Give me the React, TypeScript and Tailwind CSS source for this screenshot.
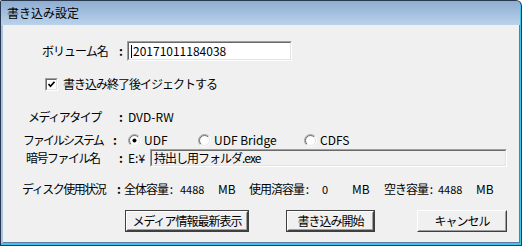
import React from "react";

function Radio({ checked, id }: { checked?: boolean; id: string }) {
	return (
		<svg width="13" height="13" viewBox="0 0 13 13" className="shrink-0">
			<defs>
				<linearGradient id={id + "o"} x1="0" y1="0" x2="1" y2="1">
					<stop offset="0.45" stopColor="#a0a0a0" />
					<stop offset="0.55" stopColor="#ffffff" />
				</linearGradient>
				<linearGradient id={id + "i"} x1="0" y1="0" x2="1" y2="1">
					<stop offset="0.45" stopColor="#696969" />
					<stop offset="0.55" stopColor="#e3e3e3" />
				</linearGradient>
			</defs>
			<circle cx="6.5" cy="6.5" r="6" fill="none" stroke={`url(#${id}o)`} strokeWidth="1" />
			<circle cx="6.5" cy="6.5" r="5" fill="#ffffff" stroke={`url(#${id}i)`} strokeWidth="1" />
			{checked && <circle cx="6.5" cy="6.5" r="2" fill="#000000" />}
		</svg>
	);
}

function Checkbox() {
	return (
		<div className="w-[13px] h-[13px] shrink-0 border border-t-[#a0a0a0] border-l-[#a0a0a0] border-b-white border-r-white">
			<div className="w-full h-full bg-white border border-t-[#696969] border-l-[#696969] border-b-[#e3e3e3] border-r-[#e3e3e3] flex items-center justify-center">
				<svg width="9" height="9" viewBox="0 0 9 9">
					<polyline points="1.5,4 3.5,6.2 7.5,1.8" fill="none" stroke="#000" strokeWidth="1.7" />
				</svg>
			</div>
		</div>
	);
}

function Button({ label, width, isDefault }: { label: string; width: string; isDefault?: boolean }) {
	return (
		<div className={`${width} h-[22px] ${isDefault ? "border border-[#404040]" : ""} bg-[#f0f0f0]`}>
			<div className="w-full h-full border border-t-white border-l-white border-b-[#404040] border-r-[#404040]">
				<div className="w-full h-full border border-t-[#f0f0f0] border-l-[#f0f0f0] border-b-[#a0a0a0] border-r-[#a0a0a0] flex items-center justify-center text-[12px] leading-none tracking-[-1px]">
					{label}
				</div>
			</div>
		</div>
	);
}

function Colon({ width }: { width: string }) {
	return <span className={`${width} shrink-0 font-bold pl-[1px]`}>:</span>;
}

export default function App() {
	return (
		<div className="w-[522px] h-[246px] whitespace-nowrap font-['Noto_Sans_CJK_JP','Noto_Sans',sans-serif] text-black bg-[#27384f] rounded-tr-[6px] rounded-tl-[2px] p-px">
			<div className="w-full h-full flex flex-col rounded-tr-[5px] overflow-hidden bg-[#3fc4ec] pb-[2px] pr-[1px]">
				{/* title bar */}
				<div className="h-[24px] shrink-0 bg-gradient-to-b from-[#8eadd1] to-[#bad2eb] flex items-center pl-[6px] text-[12px] leading-none">
					書き込み設定
				</div>
				<div className="flex-1 flex border-l-2 border-[#a9c3e0] bg-[#f0f0f0]">
					<div className="flex-1 flex flex-col text-[12px] leading-none border-b border-r border-[#5c7ca3]">
						{/* volume name */}
						<div className="mt-[16px] h-[20px] flex items-center">
							<span className="ml-[39px] w-[76px] shrink-0 tracking-[-1px]">ボリューム名</span>
							<Colon width="w-[9px]" />
							<div className="w-[165px] h-[20px] shrink-0 border border-t-[#a0a0a0] border-l-[#a0a0a0] border-b-white border-r-white">
								<div className="w-full h-full bg-white border border-t-[#696969] border-l-[#696969] border-b-[#e3e3e3] border-r-[#e3e3e3] flex items-center pl-[2px]">
									<span className="w-px h-[13px] bg-black mr-px" />
									20171011184038
								</div>
							</div>
						</div>

						{/* eject checkbox */}
						<div className="mt-[16px] h-[14px] flex items-center">
							<div className="ml-[42px]">
								<Checkbox />
							</div>
							<span className="ml-[5px] tracking-[-1px]">書き込み終了後イジェクトする</span>
						</div>

						{/* media type */}
						<div className="mt-[19px] h-[14px] flex items-center">
							<span className="ml-[25px] w-[90px] shrink-0 tracking-[-1.5px]">メディアタイプ</span>
							<Colon width="w-[10px]" />
							<span>DVD-RW</span>
						</div>

						{/* file system */}
						<div className="mt-[9px] h-[14px] flex items-center">
							<span className="ml-[20px] w-[89px] shrink-0 tracking-[-2px]">ファイルシステム</span>
							<Colon width="w-[16px]" />
							<Radio checked id="r1" />
							<span className="ml-[3px] w-[54px] shrink-0">UDF</span>
							<Radio id="r2" />
							<span className="ml-[3px] w-[90px] shrink-0">UDF Bridge</span>
							<Radio id="r3" />
							<span className="ml-[3px]">CDFS</span>
						</div>

						{/* encrypted file */}
						<div className="mt-[2px] h-[18px] flex items-center">
							<span className="ml-[23px] w-[92px] shrink-0 tracking-[-1.5px]">暗号ファイル名</span>
							<Colon width="w-[10px]" />
							<span className="w-[22px] shrink-0">E:¥</span>
							<div className="w-[357px] h-[18px] shrink-0 border border-t-[#a0a0a0] border-l-[#a0a0a0] border-b-white border-r-white">
								<div className="w-full h-full bg-[#f0f0f0] border border-t-[#696969] border-l-[#696969] border-b-[#e3e3e3] border-r-[#e3e3e3] flex items-center pl-[2px] tracking-[-1px]">
									持出し用フォルダ.exe
								</div>
							</div>
						</div>

						{/* disk usage */}
						<div className="mt-[15px] h-[14px] flex items-center">
							<span className="ml-[19px] w-[94px] shrink-0 tracking-[-1.5px]">ディスク使用状況</span>
							<Colon width="w-[8px]" />
							<span className="w-[56px] shrink-0 tracking-[-1px]">全体容量 :</span>
							<span className="w-[38px] shrink-0 text-[11px]">4488</span>
							<span className="w-[31px] shrink-0">MB</span>
							<span className="w-[73px] shrink-0 tracking-[-1px]">使用済容量 :</span>
							<span className="w-[30px] shrink-0 text-[11px]">0</span>
							<span className="w-[32px] shrink-0">MB</span>
							<span className="w-[54px] shrink-0 tracking-[-1px]">空き容量 :</span>
							<span className="w-[38px] shrink-0 text-[11px]">4488</span>
							<span>MB</span>
						</div>

						{/* buttons */}
						<div className="mt-[14px] flex">
							<div className="ml-[122px]">
								<Button label="メディア情報最新表示" width="w-[124px]" isDefault />
							</div>
							<div className="ml-[37px]">
								<Button label="書き込み開始" width="w-[89px]" isDefault />
							</div>
							<div className="ml-[42px]">
								<Button label="キャンセル" width="w-[90px]" />
							</div>
						</div>
					</div>
				</div>
			</div>
		</div>
	);
}
